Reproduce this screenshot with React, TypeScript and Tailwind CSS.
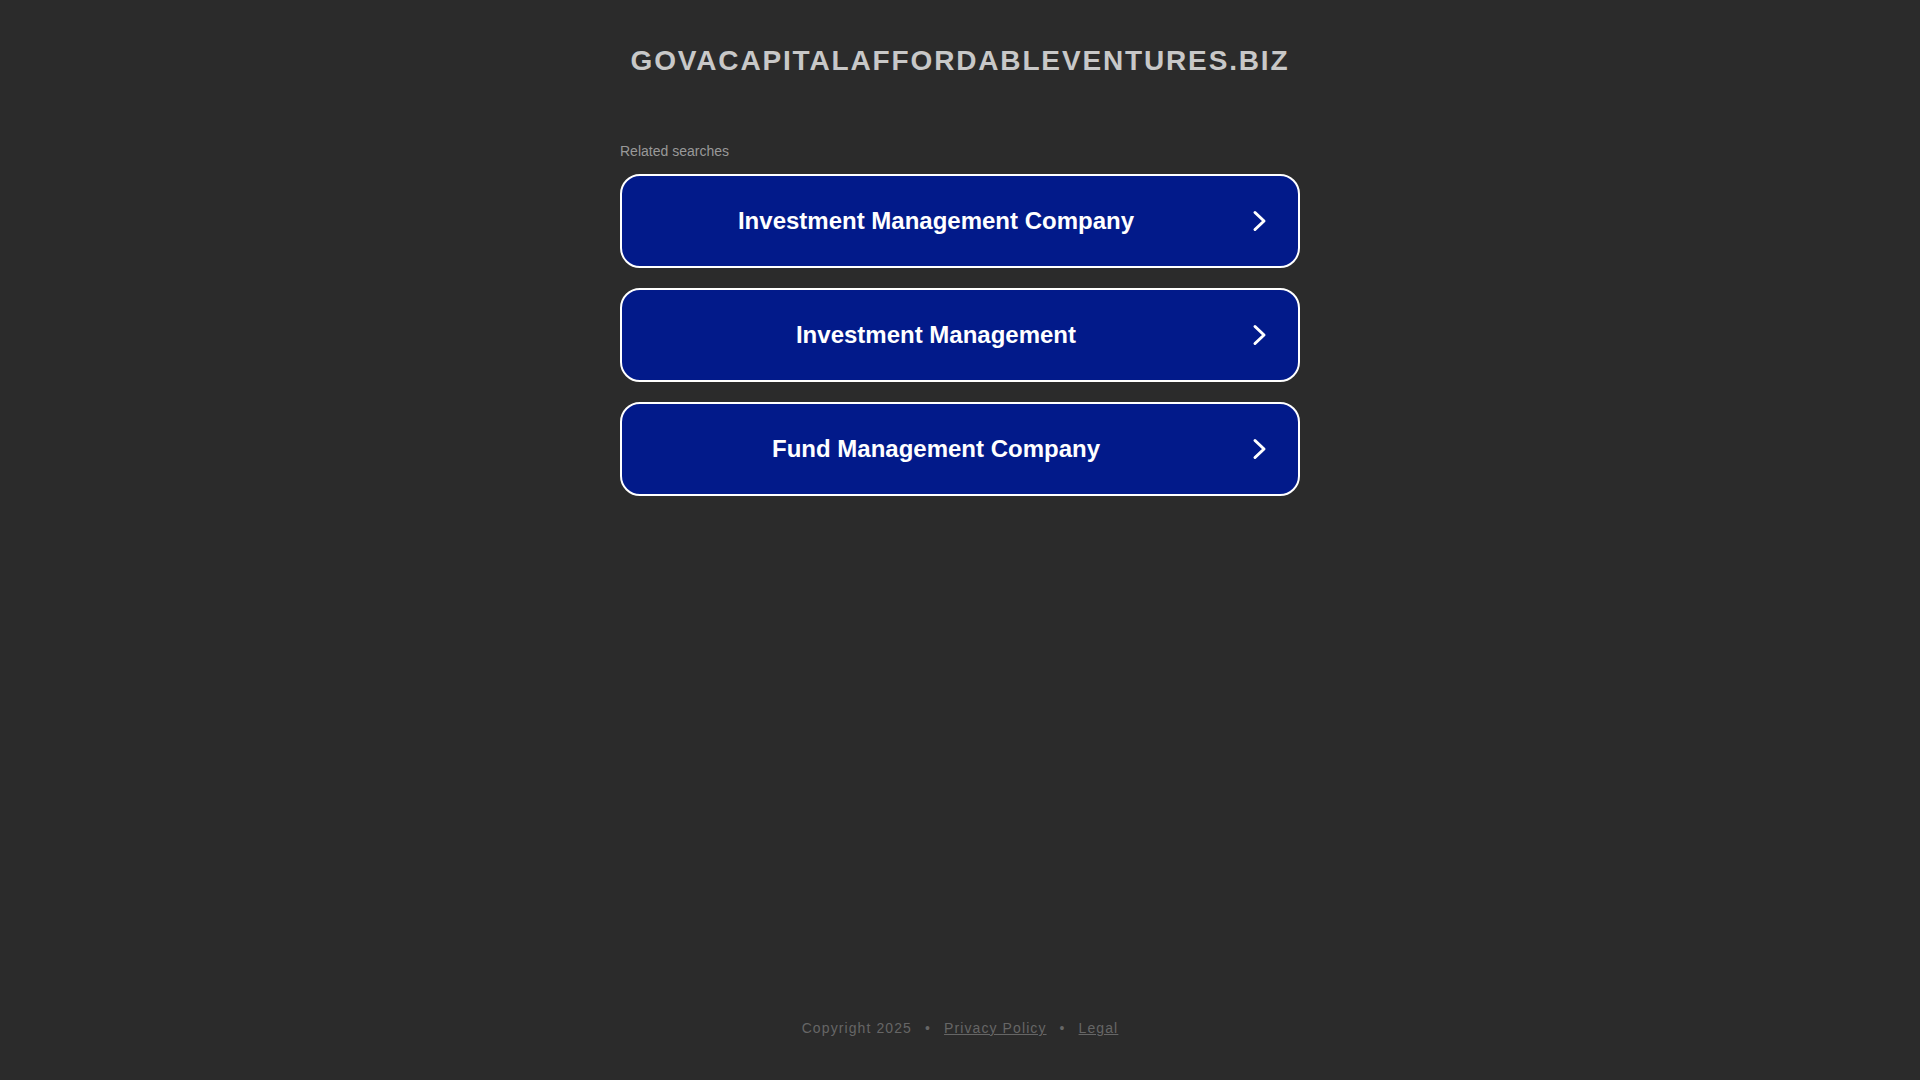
import React from "react";

const items = [
  "Investment Management Company",
  "Investment Management",
  "Fund Management Company",
];

function Chevron() {
  return (
    <svg width="16" height="22" viewBox="0 0 16 22" fill="none">
      <path
        d="M3 2.5 L12 11 L3 19.5"
        stroke="#ffffff"
        strokeWidth="3"
        strokeLinecap="round"
        strokeLinejoin="round"
      />
    </svg>
  );
}

export default function App() {
  return (
    <div
      className="min-h-screen h-screen w-full bg-[#2b2b2b] flex flex-col items-center"
      style={{ fontFamily: '"Liberation Sans", Arial, sans-serif' }}
    >
      <header className="pt-[40px]">
        <h1 className="text-[28px] leading-[42px] font-bold uppercase tracking-[1.85px] text-[#c8c8c8]">
          govacapitalaffordableventures.biz
        </h1>
      </header>

      <main className="w-[680px] mt-[59px] flex flex-col">
        <div className="text-[14px] leading-[20px] text-[#999999] mb-[13px]">
          Related searches
        </div>
        <div className="flex flex-col gap-[20px]">
          {items.map((t) => (
            <a
              key={t}
              href="#"
              className="h-[94px] rounded-[20px] border-2 border-white bg-[#021a8a] flex items-center px-[14px]"
            >
              <span className="flex-1 text-center text-white font-bold text-[24px] leading-[30px]">
                {t}
              </span>
              <span className="w-[48px] flex justify-center items-center">
                <Chevron />
              </span>
            </a>
          ))}
        </div>
      </main>

      <footer className="mt-auto pb-[42px] text-[14px] leading-[20px] tracking-[1.1px] text-[#666666] flex items-center">
        <span>Copyright 2025</span>
        <span className="mx-[13px]">•</span>
        <a href="#" className="underline text-[#666666]">
          Privacy Policy
        </a>
        <span className="mx-[13px]">•</span>
        <a href="#" className="underline text-[#666666]">
          Legal
        </a>
      </footer>
    </div>
  );
}
